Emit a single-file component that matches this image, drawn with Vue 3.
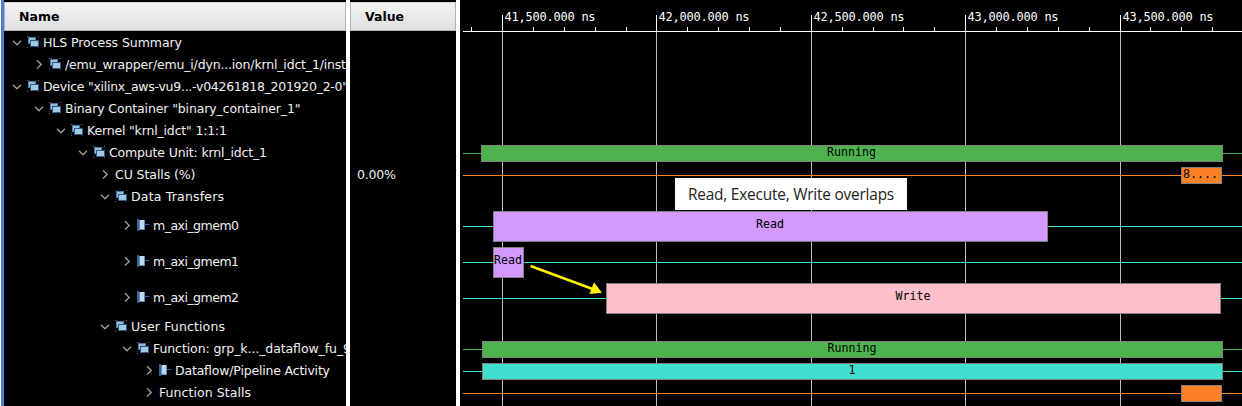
<script setup>
import { computed } from 'vue'

const rows = [
  { level: 0, open: true, icon: 'group', label: 'HLS Process Summary', width: 139 },
  { level: 1, open: false, icon: 'group', label: '/emu_wrapper/emu_i/dyn...ion/krnl_idct_1/inst', width: 281 },
  { level: 0, open: true, icon: 'group', label: 'Device "xilinx_aws-vu9...-v04261818_201920_2-0"', width: 305 },
  { level: 1, open: true, icon: 'group', label: 'Binary Container "binary_container_1"', width: 235.5 },
  { level: 2, open: true, icon: 'group', label: 'Kernel "krnl_idct" 1:1:1', width: 140 },
  { level: 3, open: true, icon: 'group', label: 'Compute Unit: krnl_idct_1', width: 158 },
  { level: 4, open: false, label: 'CU Stalls (%)', width: 80.5, value: '0.00%' },
  { level: 4, open: true, icon: 'group', label: 'Data Transfers', width: 93 },
  { level: 5, open: false, icon: 'port', label: 'm_axi_gmem0', width: 86, tall: true },
  { level: 5, open: false, icon: 'port', label: 'm_axi_gmem1', width: 86, tall: true },
  { level: 5, open: false, icon: 'port', label: 'm_axi_gmem2', width: 86, tall: true },
  { level: 4, open: true, icon: 'group', label: 'User Functions', width: 94 },
  { level: 5, open: true, icon: 'group', label: 'Function: grp_k..._dataflow_fu_9', width: 198 },
  { level: 6, open: false, icon: 'port', label: 'Dataflow/Pipeline Activity', width: 155 },
  { level: 6, open: false, label: 'Function Stalls', width: 92 },
]

const traces = {
  5: { line: 'green', from: 481, to: 1223, text: 'Running' },
  6: { line: 'orange', from: 1181, to: 1222, text: '8....', start: true },
  8: { line: 'cyan', fill: 'purple', from: 493, to: 1048, text: 'Read' },
  9: { line: 'cyan', fill: 'purple', from: 493, to: 524, text: 'Read' },
  10: { line: 'cyan', fill: 'pink', from: 606, to: 1221, text: 'Write' },
  12: { line: 'green', from: 482, to: 1223, text: 'Running' },
  13: { line: 'cyan', from: 482, to: 1223, text: '1' },
  14: { line: 'orange', from: 1181, to: 1222, text: '' },
}
const lanes = rows.map((r, i) => ({ tall: r.tall, bar: traces[i] }))

const ORIGIN = 460
const ticks = computed(() => {
  const out = []
  for (let k = -1; k <= 23; k++) {
    const major = k % 5 === 0
    const time = 41500 + k * 100
    out.push({
      x: Math.floor(502.5 + k * 30.88) - ORIGIN,
      major,
      label: `${Math.floor(time / 1000)},${String(time % 1000).padStart(3, '0')}.000 ns`,
    })
  }
  return out
})
const majors = computed(() => ticks.value.filter((t) => t.major))
</script>

<template>
  <div class="viewer">
    <div class="edge"></div>
    <section class="names">
      <header class="head"><span>Name</span></header>
      <div v-for="(r, i) in rows" :key="i" class="row" :class="{ tall: r.tall }" :style="{ paddingLeft: 7 + r.level * 22 + 'px' }">
        <svg class="chevron" width="12" height="12" viewBox="0 0 12 12">
          <path v-if="r.open" d="M2 4.8 L6 8.8 L10 4.8" />
          <path v-else d="M4 2.2 L8.2 6.4 L4 10.6" />
        </svg>
        <svg v-if="r.icon === 'group'" class="icon" width="14" height="14" viewBox="0 0 14 14" shape-rendering="crispEdges">
          <path d="M1 1h1v1h-1zM12 1h1v1h-1zM1 12h1v1h-1z" fill="#666" />
          <path d="M3 1h1v1h-1zM10 1h1v1h-1zM1 10h1v1h-1zM12 12h1v1h-1z" fill="#333" />
          <rect x="2" y="2" width="8" height="7" fill="#4a78a3" />
          <rect x="3" y="3" width="6" height="5" fill="#96c0da" />
          <rect x="4" y="5" width="9" height="7" fill="#2d5a86" />
          <rect x="5" y="6" width="7" height="5" fill="#a0cae0" />
        </svg>
        <svg v-else-if="r.icon === 'port'" class="icon" width="14" height="14" viewBox="0 0 14 14" shape-rendering="crispEdges">
          <rect x="1" y="1" width="2" height="12" fill="#34659a" />
          <rect x="3" y="2" width="6" height="10" fill="#5d8db8" />
          <rect x="4" y="2" width="4" height="9" fill="#bfd9ed" />
          <rect x="9" y="6" width="4" height="1" fill="#34659a" />
        </svg>
        <svg class="label" :class="{ bare: !r.icon }" :width="r.width + 2" height="22">
          <text x="0" y="16" :textLength="r.width">{{ r.label }}</text>
        </svg>
      </div>
    </section>
    <div class="divider"></div>
    <section class="values">
      <header class="head"><span>Value</span></header>
      <div v-for="(r, i) in rows" :key="i" class="row" :class="{ tall: r.tall }">
        <svg v-if="r.value" class="label" width="44" height="22"><text x="0" y="16" textLength="39">{{ r.value }}</text></svg>
      </div>
    </section>
    <div class="divider"></div>
    <section class="wave">
      <svg class="grid" width="782" height="406" shape-rendering="crispEdges">
        <rect v-for="t in majors" :key="t.x" :x="t.x" y="32" width="1" height="374" fill="#bdbdbd" />
        <rect v-for="t in ticks" :key="'t' + t.x" :x="t.x" :y="t.major ? 15 : 27" width="1" :height="t.major ? 16 : 4" fill="#fff" />
        <rect x="3" y="31" width="779" height="1" fill="#fff" />
        <text v-for="t in majors" :key="'l' + t.x" :x="t.x + 2.6" y="21" textLength="91" class="mono">{{ t.label }}</text>
      </svg>
      <div class="lanes">
        <div v-for="(lane, i) in lanes" :key="i" class="lane" :class="{ tall: lane.tall }">
          <template v-if="lane.bar">
            <div class="trace" :class="lane.bar.line"></div>
            <div
              class="bar"
              :class="[lane.bar.fill || lane.bar.line, { start: lane.bar.start }]"
              :style="{ marginLeft: lane.bar.from - ORIGIN + 'px', width: lane.bar.to - lane.bar.from + 'px' }"
            >{{ lane.bar.text }}</div>
          </template>
        </div>
      </div>
      <svg class="arrow" width="76" height="34" viewBox="528 262 76 34">
        <path d="M530.5 266 L594 289.5" stroke="#fff200" stroke-width="2.4" />
        <path d="M594 282.2 L602 292.7 L589.5 294 Z" fill="#fff200" />
      </svg>
      <div class="note"><span>Read, Execute, Write overlaps</span></div>
    </section>
  </div>
</template>

<style>
body { background: #000; overflow: hidden; }
</style>

<style scoped>
.viewer { display: flex; width: 1242px; height: 406px; overflow: hidden; background: #000; color: #f2f2f2; font: 12.5px "DejaVu Sans", sans-serif; }
.edge { width: 3px; flex: none; background: #4a80d0; border-left: 1px solid #fff; }
.names { width: 342px; flex: none; overflow: hidden; }
.values { width: 106px; flex: none; overflow: hidden; }
.divider { width: 4px; flex: none; background: #fff; }
.head { box-sizing: border-box; height: 29px; margin-top: 2px; border: 1px solid #b4b4b4; border-top-color: #d0d0d0; background: linear-gradient(#f3f3f3, #dedfe1); color: #000; font-weight: bold; font-size: 12.5px; line-height: 27px; padding-left: 14px; }
.row { display: flex; align-items: center; height: 22px; box-sizing: border-box; white-space: pre; }
.row.tall { height: 36px; }
.values .row { padding-left: 7px; }
.chevron { flex: none; margin-right: 3px; fill: none; stroke: #9a9a9a; stroke-width: 1.4; }
.icon { flex: none; margin-right: 3px; }
.label { flex: none; fill: #f2f2f2; }
.label.bare { margin-left: 1px; }
.wave { width: 782px; flex: none; position: relative; overflow: hidden; }
.grid { position: absolute; left: 0; top: 0; }
.mono { font: 12px "DejaVu Sans Mono", monospace; fill: #fff; }
.lanes { margin-top: 31px; position: relative; }
.lane { position: relative; height: 22px; padding-top: 4px; box-sizing: border-box; }
.lane.tall { height: 36px; }
.trace { position: absolute; left: 3px; right: 0; top: 12px; height: 1px; }
.tall .trace { top: 19px; }
.bar { position: relative; box-sizing: border-box; height: 17px; border: 1px solid #808080; color: #000; text-align: center; padding-right: 1px; font: 11.63px/12px "DejaVu Sans Mono", monospace; overflow: hidden; white-space: nowrap; }
.tall .bar { height: 31px; line-height: 25px; }
.bar.start { text-align: left; padding-left: 1px; }
.green { background: #4eb34e; }
.orange { background: #ff8126; }
.cyan { background: #40e0d0; }
.purple { background: #d399ff; }
.pink { background: #ffc0cb; }
.arrow { position: absolute; left: 68px; top: 262px; }
.note { position: absolute; left: 215px; top: 178px; width: 232px; height: 32px; background: #fff; color: #222; text-align: center; font: 15.4px/33px "Open Sans", sans-serif; letter-spacing: -0.2px; white-space: nowrap; }
</style>
